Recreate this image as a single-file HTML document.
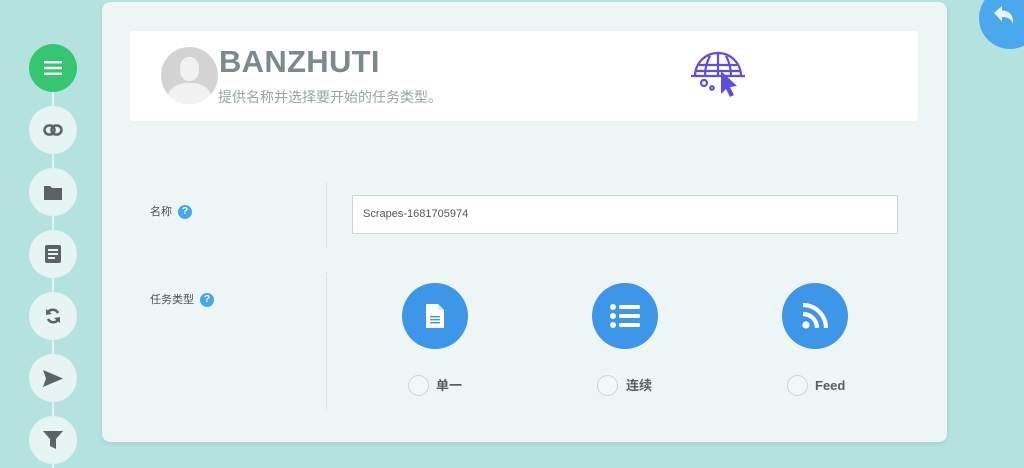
<!DOCTYPE html>
<html><head><meta charset="utf-8"><style>
*{margin:0;padding:0;box-sizing:border-box}
body{width:1024px;height:465px;background:#b3e2df;position:relative;overflow:hidden;font-family:"Liberation Sans","Noto Sans CJK SC",sans-serif}
.ab{position:absolute}
.side{left:53px;top:68px;width:2px;height:400px;background:#e4f1f0;position:absolute;margin-left:-1px}
.sc{position:absolute;left:29px;width:48px;height:48px;border-radius:50%;background:#e6f4f3;display:flex;align-items:center;justify-content:center}
.card{left:102px;top:2px;width:845px;height:440px;background:#edf5f5;border-radius:8px;box-shadow:0 2px 4px rgba(0,0,0,.08)}
.hdr{left:130px;top:31px;width:788px;height:90px;background:#fff;border-radius:3px}
.lbl{font-size:11px;color:#4a5559;line-height:14px}
.q{display:inline-block;width:14px;height:14px;border-radius:50%;background:#45a6ea;color:#fff;font-size:10px;font-weight:bold;text-align:center;line-height:14px;vertical-align:top;margin-left:6px}
.dl{position:absolute;left:326px;border-left:1px dotted #cfd8d8}
.big{position:absolute;width:66px;height:66px;border-radius:50%;background:#3d96e8;display:flex;align-items:center;justify-content:center;top:283px}
.rad{position:absolute;top:375px;width:21px;height:21px;border-radius:50%;border:1px solid #ccd3d3;background:#f2f7f7}
.rl{position:absolute;top:375px;line-height:21px;font-size:13px;font-weight:bold;color:#555f63}
</style></head><body>
<div class="side"></div>
<div class="sc" style="top:44px;background:#36c672"><svg width="20" height="16"><rect x="1" y="1" width="18" height="2.4" fill="#fff"/><rect x="1" y="6.8" width="18" height="2.4" fill="#fff"/><rect x="1" y="12.6" width="18" height="2.4" fill="#fff"/></svg></div>
<div class="sc" style="top:106px"><svg width="20" height="12"><rect x="1.5" y="1.5" width="10" height="9" rx="4.5" fill="none" stroke="#5b6367" stroke-width="2.5"/><rect x="8.5" y="1.5" width="10" height="9" rx="4.5" fill="none" stroke="#5b6367" stroke-width="2.5"/></svg></div>
<div class="sc" style="top:168px"><svg width="18" height="15"><path d="M0 1h6l2 2h10v12H0z" fill="#5b6367"/></svg></div>
<div class="sc" style="top:230px"><svg width="16" height="18"><rect width="16" height="18" rx="2" fill="#5b6367"/><rect x="3" y="4" width="10" height="2" fill="#e6f4f3"/><rect x="3" y="8" width="10" height="2" fill="#e6f4f3"/><rect x="3" y="12" width="7" height="2" fill="#e6f4f3"/></svg></div>
<div class="sc" style="top:292px"><svg width="16" height="18"><path d="M13 6A6 6 0 0 0 3 5" fill="none" stroke="#5b6367" stroke-width="2.5"/><path d="M3 12a6 6 0 0 0 10 1" fill="none" stroke="#5b6367" stroke-width="2.5"/><path d="M1 2l0 6 6-1z M15 16l0-6-6 1z" fill="#5b6367"/></svg></div>
<div class="sc" style="top:354px"><svg width="20" height="17"><path d="M0 0l20 8.5L0 17l3-8.5z" fill="#5b6367"/></svg></div>
<div class="sc" style="top:416px"><svg width="20" height="20"><path d="M0 1h20l-7 8v10l-6-3V9z" fill="#5b6367"/></svg></div>

<div class="ab card"></div>
<div class="ab hdr"></div>
<div class="ab" style="left:161px;top:47px;width:57px;height:57px;border-radius:50%;background:#d3d3d3;overflow:hidden">
<div class="ab" style="left:19px;top:10px;width:19px;height:24px;border-radius:45%;background:#f1f1f1"></div>
<div class="ab" style="left:7px;top:36px;width:43px;height:30px;border-radius:45% 45% 0 0;background:#f1f1f1"></div></div>
<div class="ab" style="left:219px;top:44px;font-size:31px;font-weight:bold;color:#7c8a8c;letter-spacing:0.3px">BANZHUTI</div>
<div class="ab" style="left:218px;top:87px;font-size:14px;color:#98a3a5">提供名称并选择要开始的任务类型。</div>
<svg class="ab" style="left:690px;top:48px" width="60" height="52" viewBox="0 0 60 52">
<g fill="none" stroke="#5b4fe0" stroke-width="2.2"><path d="M5 28A23 23 0 0 1 51 28"/><path d="M28 5v23M20 8q-5 9-5 20M36 8q5 9 5 20"/><path d="M9 17h38M6 23h44"/><path d="M1 28h54"/><circle cx="14" cy="35" r="3"/><circle cx="22" cy="40" r="1.8"/></g>
<path d="M31 23l0 23 5-5 4 8 4-2-4-8 7-1z" fill="#5b4fe0"/></svg>
<div class="ab" style="left:979px;top:-13px;width:62px;height:62px;border-radius:50%;background:#4aa9ec"></div>
<svg class="ab" style="left:994px;top:6px" width="20" height="18"><path d="M0 7l8-7v4.5c7 0 12 5 11 13-2-4.5-5-6.5-11-6.5v4.5z" fill="#e8f4fb"/></svg>

<div class="ab lbl" style="left:150px;top:205px">名称<span class="q">?</span></div>
<div class="dl" style="top:183px;height:64px"></div>
<div class="ab" style="left:352px;top:195px;width:546px;height:39px;background:#fff;border:1px solid #d0d6d6;font-size:11px;color:#555;padding:12px 10px">Scrapes-1681705974</div>
<div class="ab lbl" style="left:150px;top:293px">任务类型<span class="q">?</span></div>
<div class="dl" style="top:272px;height:138px"></div>

<div class="big" style="left:402px"><svg width="18" height="24"><path d="M0 0h12l6 6v18H0z" fill="#fff"/><path d="M12 0v6h6" fill="#d6e9fa"/><rect x="4" y="12" width="10" height="1.4" fill="#3d96e8"/><rect x="4" y="15" width="10" height="1.4" fill="#3d96e8"/><rect x="4" y="18" width="10" height="1.4" fill="#3d96e8"/></svg></div>
<div class="big" style="left:592px"><svg width="30" height="24"><circle cx="3" cy="3" r="3" fill="#fff"/><circle cx="3" cy="12" r="3" fill="#fff"/><circle cx="3" cy="21" r="3" fill="#fff"/><rect x="9" y="1" width="21" height="4" rx="1.5" fill="#fff"/><rect x="9" y="10" width="21" height="4" rx="1.5" fill="#fff"/><rect x="9" y="19" width="21" height="4" rx="1.5" fill="#fff"/></svg></div>
<div class="big" style="left:782px"><svg width="26" height="26"><circle cx="4" cy="22" r="3.6" fill="#fff"/><path d="M1 11a14 14 0 0 1 14 14M1 2a23 23 0 0 1 23 23" fill="none" stroke="#fff" stroke-width="4.2"/></svg></div>
<div class="rad" style="left:408px"></div><div class="rl" style="left:436px">单一</div>
<div class="rad" style="left:597px"></div><div class="rl" style="left:626px">连续</div>
<div class="rad" style="left:787px"></div><div class="rl" style="left:815px">Feed</div>
</body></html>
